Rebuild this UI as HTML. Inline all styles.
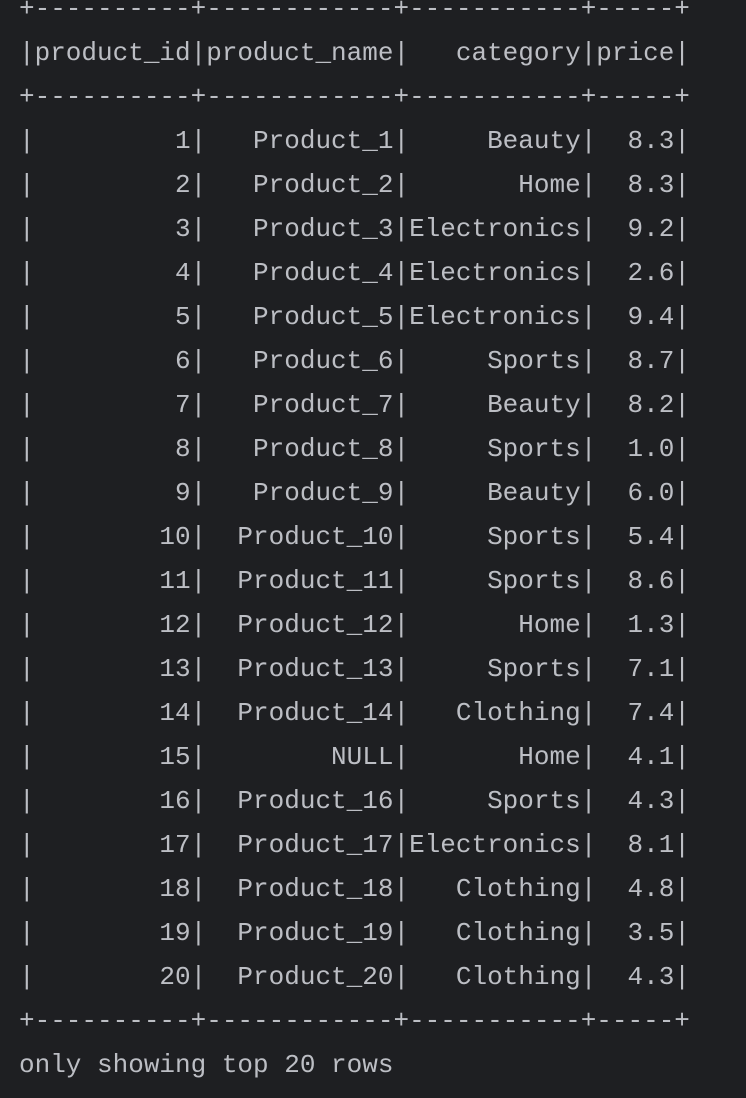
<!DOCTYPE html>
<html><head><meta charset="utf-8"><style>
html,body{margin:0;padding:0;background:#1e1f22;width:746px;height:1098px;overflow:hidden}
pre{margin:0;position:absolute;left:19px;top:-13px;font-family:"Liberation Mono",monospace;font-size:26px;line-height:44px;color:#bcbec4;white-space:pre}
</style></head><body><pre>+----------+------------+-----------+-----+
|product_id|product_name|   category|price|
+----------+------------+-----------+-----+
|         1|   Product_1|     Beauty|  8.3|
|         2|   Product_2|       Home|  8.3|
|         3|   Product_3|Electronics|  9.2|
|         4|   Product_4|Electronics|  2.6|
|         5|   Product_5|Electronics|  9.4|
|         6|   Product_6|     Sports|  8.7|
|         7|   Product_7|     Beauty|  8.2|
|         8|   Product_8|     Sports|  1.0|
|         9|   Product_9|     Beauty|  6.0|
|        10|  Product_10|     Sports|  5.4|
|        11|  Product_11|     Sports|  8.6|
|        12|  Product_12|       Home|  1.3|
|        13|  Product_13|     Sports|  7.1|
|        14|  Product_14|   Clothing|  7.4|
|        15|        NULL|       Home|  4.1|
|        16|  Product_16|     Sports|  4.3|
|        17|  Product_17|Electronics|  8.1|
|        18|  Product_18|   Clothing|  4.8|
|        19|  Product_19|   Clothing|  3.5|
|        20|  Product_20|   Clothing|  4.3|
+----------+------------+-----------+-----+
only showing top 20 rows</pre></body></html>
